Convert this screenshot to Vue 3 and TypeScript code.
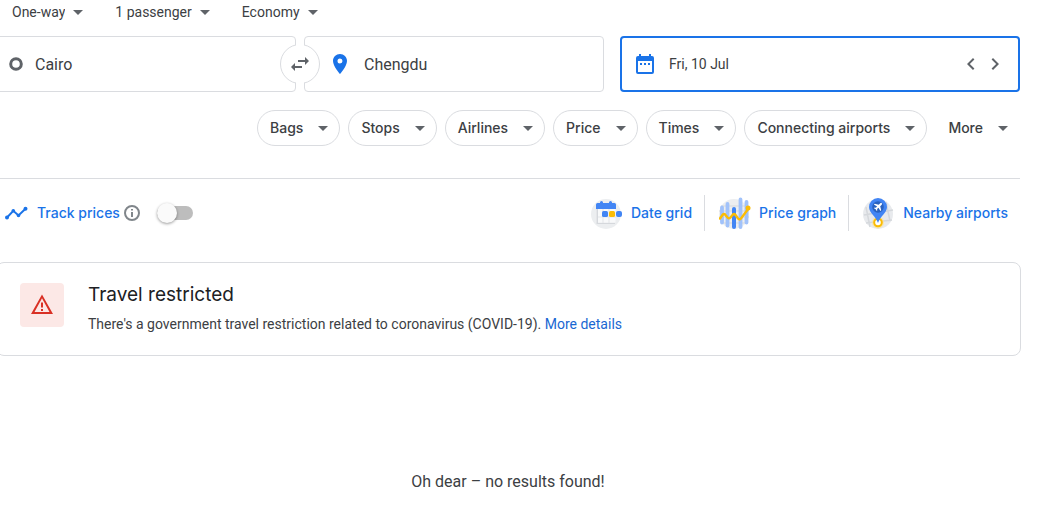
<script setup lang="ts">
import { ref } from 'vue'

interface TripOption {
  id: string
  label: string
  choices: string[]
}

const tripOptions: TripOption[] = [
  { id: 'trip', label: 'Trip type', choices: ['One-way', 'Return', 'Multi-city'] },
  { id: 'passengers', label: 'Passengers', choices: ['1 passenger', '2 passengers'] },
  { id: 'cabin', label: 'Cabin class', choices: ['Economy', 'Business', 'First'] },
]

const filters: string[] = ['Bags', 'Stops', 'Airlines', 'Price', 'Times', 'Connecting airports', 'More']

const selected = ref<string[]>(tripOptions.map((o) => o.choices[0]))
const origin = ref('Cairo')
const destination = ref('Chengdu')
const date = ref('Fri, 10 Jul')
const tracking = ref(false)

function swap(): void {
  const from = origin.value
  origin.value = destination.value
  destination.value = from
}
</script>

<template>
  <div class="page">
    <main class="content">
      <div class="trip">
        <label v-for="(o, i) in tripOptions" :key="o.id" class="trip-field" :for="o.id">
          <select :id="o.id" v-model="selected[i]" :aria-label="o.label">
            <option v-for="c in o.choices" :key="c">{{ c }}</option>
          </select>
          <svg class="caret" viewBox="0 0 10 5" aria-hidden="true"><path d="M0 0h10L5 5z" /></svg>
        </label>
      </div>

      <form class="search" @submit.prevent>
        <label class="box from">
          <svg class="ring" viewBox="0 0 14 14" aria-hidden="true"><circle cx="7" cy="7" r="5.3" /></svg>
          <input v-model="origin" type="text" aria-label="Where from?" />
        </label>
        <div class="box to">
          <button class="swap" type="button" aria-label="Swap origin and destination" @click="swap">
            <svg viewBox="0 0 24 24" aria-hidden="true">
              <path d="M6.99 11 3 15l3.99 4v-3H14v-2H6.99zM21 9l-3.990-4v3H10v2h7.010v3z" />
            </svg>
          </button>
          <label class="inner">
            <svg class="pin" viewBox="0 0 24 24" aria-hidden="true">
              <path d="M12 2C8.130 2 5 5.130 5 9c0 5.250 7 13 7 13s7-7.750 7-13c0-3.870-3.130-7-7-7zm0 9.500a2.500 2.500 0 1 1 0-5 2.500 2.500 0 0 1 0 5z" />
            </svg>
            <input v-model="destination" type="text" aria-label="Where to?" />
          </label>
        </div>
        <div class="box when">
          <label class="inner">
            <svg class="calendar" viewBox="0 0 24 24" aria-hidden="true">
              <path d="M19 4h-1V2h-2v2H8V2H6v2H5a2 2 0 0 0-2 2v14a2 2 0 0 0 2 2h14a2 2 0 0 0 2-2V6a2 2 0 0 0-2-2zm0 16H5V9h14zM7 11h2v2H7zm4 0h2v2h-2zm4 0h2v2h-2z" />
            </svg>
            <input v-model="date" type="text" aria-label="Departure date" />
          </label>
          <button class="step" type="button" aria-label="Previous day">
            <svg viewBox="0 0 24 24" aria-hidden="true"><path d="M15.410 7.410 14 6l-6 6 6 6 1.410-1.410L10.830 12z" /></svg>
          </button>
          <button class="step" type="button" aria-label="Next day">
            <svg viewBox="0 0 24 24" aria-hidden="true"><path d="M10 6 8.590 7.410 13.170 12l-4.580 4.590L10 18l6-6z" /></svg>
          </button>
        </div>
      </form>

      <div class="filters">
        <button v-for="f in filters" :key="f" type="button" class="chip" :class="{ plain: f === 'More' }">
          {{ f }}
          <svg class="caret" viewBox="0 0 10 5" aria-hidden="true"><path d="M0 0h10L5 5z" /></svg>
        </button>
      </div>

      <div class="tools">
        <svg class="trend" viewBox="0 0 24 14" aria-hidden="true">
          <path d="M3 11.500 9.300 4.800l5.200 4.700L21.500 2.800" />
          <circle cx="3" cy="11.500" r="2" /><circle cx="9.300" cy="4.800" r="1.800" />
          <circle cx="14.500" cy="9.500" r="1.800" /><circle cx="21.500" cy="2.800" r="2" />
        </svg>
        <label class="track" for="track">Track prices</label>
        <svg class="info" viewBox="0 0 16 16" aria-hidden="true">
          <circle cx="8" cy="8" r="7" /><path d="M8 7v5M8 4v1.600" />
        </svg>
        <input id="track" v-model="tracking" class="toggle" type="checkbox" role="switch" />

        <div class="views">
          <button type="button" class="view">
            <svg viewBox="0 0 32 32" aria-hidden="true">
              <circle cx="15" cy="17" r="15" fill="#eceef0" />
              <path d="M5.500 12h19v13.500h-19z" fill="#f8f9fa" />
              <path d="M5.500 12h1.500v14h17v1H5.500z" fill="#d5d8dc" />
              <path d="M12 12v14M18 12v14M7 20h18" stroke="#e3e5e8" fill="none" />
              <path d="M5 12V7.500Q5 6 6.500 6H9V5.500a1.500 1.500 0 0 1 3 0V6h6v-.5a1.500 1.500 0 0 1 3 0V6h2.500Q25 6 25 7.500V12z" fill="#4285f4" />
              <rect x="11" y="14" width="6" height="6" rx="1.500" fill="#4285f4" />
              <rect x="18" y="14" width="6" height="6" rx="1.500" fill="#fbbc04" />
              <rect x="25" y="14" width="6" height="6" rx="2" fill="#4285f4" />
            </svg>
            Date grid
          </button>
          <button type="button" class="view">
            <svg viewBox="0 0 32 32" aria-hidden="true">
              <circle cx="15" cy="17" r="15" fill="#eceef0" />
              <path d="M2 9h27M0 14h30M0 20h30M3 26h25" stroke="#d5d8dc" fill="none" />
              <path d="M3 10.500v15M8.500 7v21.500M21.500 2.500v27.500M27.500 5v20.500" stroke="#a1c2fa" stroke-width="3.800" stroke-linecap="round" fill="none" />
              <path d="M15 12v18" stroke="#4285f4" stroke-width="4" stroke-linecap="round" fill="none" />
              <path d="M1 21.500 3.500 18q1.500-2 3 0l2 2.500q1.500 1.500 3 0l2-2.500q1.500-2 3 0l2.500 3.500q1.500 1.500 3 0l7.500-10" stroke="#fbbc04" stroke-width="2.400" stroke-linecap="round" fill="none" />
              <circle cx="29" cy="11" r="2.500" fill="#fbbc04" />
            </svg>
            Price graph
          </button>
          <button type="button" class="view">
            <svg viewBox="0 0 32 32" aria-hidden="true">
              <circle cx="15" cy="17" r="15" fill="#e8eaed" />
              <path d="m3 10 4 20M1 18l29-5M3 26l26-3M23 5l4 19" stroke="#d5d8dc" stroke-width="1.500" fill="none" />
              <circle cx="15" cy="25.500" r="6" fill="#fde293" opacity=".65" />
              <circle cx="15" cy="25.500" r="3.800" fill="#fff" stroke="#fbbc04" stroke-width="2" />
              <path d="M15 1a9 9 0 0 0-9 9c0 6 6.500 8.500 9 16 2.500-7.500 9-10 9-16a9 9 0 0 0-9-9z" fill="#4285f4" />
              <circle cx="15" cy="10" r="5.800" fill="#2a62bf" />
              <path d="m18.800 6.200q-.8-.8-1.800.2l-1.300 1.300-4-1-.8.800 3.200 1.900-1.300 1.400-1.200-.2-.6.600 1.700 1 1 1.700.6-.6-.2-1.200 1.400-1.300 1.900 3.200.8-.8-1-4 1.300-1.200q1.100-1 .3-1.800z" fill="#fff" />
            </svg>
            Nearby airports
          </button>
        </div>
      </div>

      <section class="notice">
        <div class="alert">
          <svg viewBox="0 0 24 24" aria-hidden="true">
            <path d="M12 5.200 19.500 19h-15zM1 21h22L12 1.500zm10-3h2v-2h-2zm0-3.500h2V9.500h-2z" fill-rule="evenodd" />
          </svg>
        </div>
        <div>
          <h2>Travel restricted</h2>
          <p>There's a government travel restriction related to coronavirus (COVID-19). <a href="#">More details</a></p>
        </div>
      </section>

      <p class="empty">Oh dear – no results found!</p>
    </main>
  </div>
</template>

<style>
body {
  margin: 0;
  background: #fff;
}
</style>

<style scoped>
.page {
  overflow: hidden;
  font: 14px/20px Roboto, "Liberation Sans", sans-serif;
  color: #3c4043;
}
.content {
  margin: 0 26px 0 -4px;
}
button,
input,
select {
  font: inherit;
  color: inherit;
  background: none;
  border: 0;
  padding: 0;
  margin: 0;
}
input[type="text"] {
  flex: 1;
  min-width: 0;
  height: 24px;
  outline: 0;
}
svg {
  flex: none;
  display: block;
}
.trip {
  display: flex;
  gap: 32px;
  padding: 2px 16px 14px;
}
.trip-field {
  display: flex;
  align-items: center;
  gap: 8px;
}
.trip select {
  appearance: none;
  field-sizing: content;
  height: 20px;
  outline: 0;
}
.caret {
  width: 10px;
  height: 5px;
  fill: #5f6368;
}
.search {
  display: grid;
  grid-template-columns: 3fr 8px 3fr 16px 4fr;
}
.box {
  display: flex;
  align-items: center;
  min-width: 0;
  box-sizing: border-box;
  height: 56px;
  border: 1px solid #dadce0;
  border-radius: 4px;
  font-size: 16px;
}
.inner {
  display: flex;
  align-items: center;
  flex: 1;
  min-width: 0;
  gap: 12px;
}
.from {
  padding-left: 12px;
  gap: 12px;
}
.to {
  grid-column: 3;
  position: relative;
  padding-left: 23px;
}
.when {
  grid-column: 5;
  border: 2px solid #1a73e8;
  padding: 0 11px;
  font-size: 14px;
}
.ring {
  width: 14px;
  height: 14px;
  fill: none;
  stroke: #5f6368;
  stroke-width: 3;
}
.pin,
.calendar {
  width: 24px;
  height: 24px;
  fill: #1a73e8;
}
.step {
  width: 24px;
  height: 24px;
}
.step svg {
  width: 24px;
  height: 24px;
  fill: #5f6368;
}
/* The swap button straddles the gap between the two place boxes. */
.swap {
  position: absolute;
  left: -25px;
  top: 7px;
  width: 40px;
  height: 40px;
  box-sizing: border-box;
  border: 1px solid #dadce0;
  border-radius: 50%;
  background: #fff;
  display: flex;
  align-items: center;
  justify-content: center;
}
.swap::before {
  content: "";
  position: absolute;
  left: 15px;
  top: -2px;
  width: 8px;
  height: 42px;
  background: #fff;
}
.swap svg {
  position: relative;
  width: 24px;
  height: 24px;
  fill: #5f6368;
}
.filters {
  display: flex;
  justify-content: flex-end;
  gap: 8px;
  padding: 18px 0 32px;
  border-bottom: 1px solid #dadce0;
}
.chip {
  display: flex;
  align-items: center;
  gap: 15px;
  height: 36px;
  padding: 0 11px 0 12px;
  border: 1px solid #dadce0;
  border-radius: 18px;
  font: 500 14px/20px Inter, Roboto, sans-serif;
  white-space: nowrap;
}
.chip.plain {
  border-color: transparent;
}
.tools {
  display: flex;
  align-items: center;
  padding: 16px 0 0 8px;
  font: 500 14px/20px Inter, Roboto, sans-serif;
  color: #1a73e8;
}
.trend {
  width: 24px;
  height: 14px;
  fill: #1a73e8;
}
.trend path {
  fill: none;
  stroke: #1a73e8;
  stroke-width: 2;
}
.track {
  margin: 0 4px 0 9px;
}
.info {
  width: 16px;
  height: 16px;
  fill: none;
  stroke: #80868b;
  stroke-width: 2;
}
.toggle {
  appearance: none;
  display: flex;
  align-items: center;
  width: 36px;
  height: 14px;
  margin-left: 17px;
  border-radius: 7px;
  background: #bdbdbd;
}
.toggle::before {
  content: "";
  width: 20px;
  height: 20px;
  border-radius: 50%;
  background: #fafafa;
  box-shadow: 0 1px 3px rgba(0, 0, 0, 0.4);
}
.toggle:checked {
  justify-content: flex-end;
  background: #8ab4f8;
}
.views {
  display: flex;
  margin-left: auto;
}
.view {
  display: flex;
  align-items: center;
  gap: 8px;
  height: 36px;
  padding: 0 12px 0 14px;
  white-space: nowrap;
}
.view + .view {
  border-left: 1px solid #dadce0;
}
.view svg {
  width: 32px;
  height: 32px;
}
.notice {
  display: flex;
  gap: 24px;
  margin: 31px -1px 0 0;
  padding: 20px 23px 21px;
  border: 1px solid #dadce0;
  border-radius: 8px;
}
.alert {
  display: flex;
  align-items: center;
  justify-content: center;
  width: 44px;
  height: 44px;
  border-radius: 4px;
  background: #fce8e6;
}
.alert svg {
  width: 26px;
  height: 24px;
  fill: #d93025;
}
h2 {
  margin: 0 0 7px;
  font: 400 19px/24px Inter, Roboto, sans-serif;
  color: #202124;
}
.notice p {
  margin: 0;
}
a {
  color: #1967d2;
  text-decoration: none;
}
.empty {
  margin: 114px 0 0;
  font-size: 16px;
  line-height: 24px;
  text-align: center;
}
</style>
